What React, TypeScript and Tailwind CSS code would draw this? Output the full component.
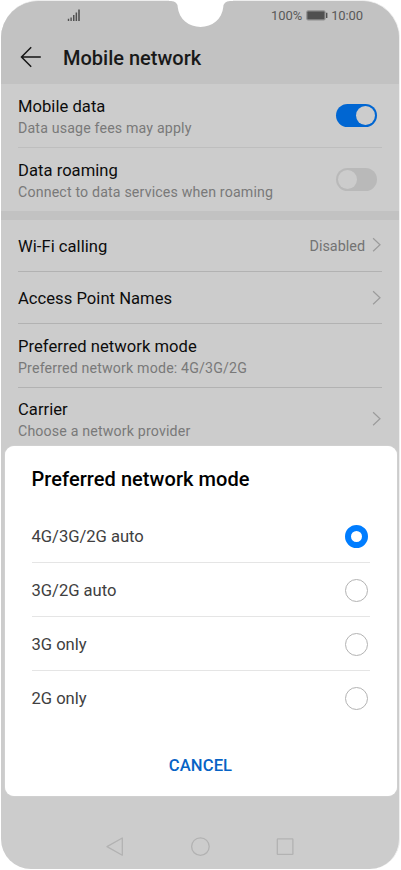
import React from "react";

function Chevron() {
  return (
    <svg width="10" height="16" viewBox="0 0 10 16" fill="none" stroke="#9b9b9b" strokeWidth="1.2">
      <path d="M1.1 1.2 8 7.7 1.1 14.2" />
    </svg>
  );
}

function Toggle({ on }: { on?: boolean }) {
  return (
    <div className={`mr-[5px] flex h-[22.5px] w-[41px] items-center rounded-full px-[2px] ${on ? "justify-end bg-[#0066d2]" : "justify-start bg-[#b9b9b9]"}`}>
      <div className="size-[19px] rounded-full bg-[#cccccc]" />
    </div>
  );
}

type RowProps = {
  title: string;
  sub?: string;
  size: string;
  divider?: string;
  value?: string;
  children?: React.ReactNode;
};

function Row({ title, sub, size, divider = "", value, children }: RowProps) {
  return (
    <div className={`mx-[17px] flex items-center justify-between ${size} ${divider}`}>
      <div className={sub ? "pt-[3px]" : "pt-px"}>
        <div className="text-[16.6px] leading-[21px] tracking-[0.03px] text-[#0c0c0c]">{title}</div>
        {sub && <div className="mt-px text-[14.2px] leading-[21px] tracking-[0.16px] text-[#797979]">{sub}</div>}
      </div>
      <div className="flex items-center">
        {value && <span className="mr-[7px] pt-[2px] text-[14.4px] text-[#737373]">{value}</span>}
        {children}
      </div>
    </div>
  );
}

const options = ["4G/3G/2G auto", "3G/2G auto", "3G only", "2G only"];

export default function App() {
  return (
    <div className="relative h-[870px] w-[401px] overflow-hidden bg-white font-['Roboto',sans-serif]">
      <main className="ml-px flex h-[869px] w-[399px] flex-col overflow-hidden rounded-t-[38px] rounded-b-[30px] border-t border-r border-[#eeeeee] bg-[#cccccc]">
        <header className="h-[83px] shrink-0 bg-[#c2c2c2]">
          <div className="flex h-[29px] items-center justify-between pr-[36px] pl-[66px]">
            <svg className="-mt-[2px]" width="14" height="14" viewBox="0 0 14 14" fill="#505050">
              <path d="M.8 10.8h1.4V13H.8zM3.4 9.5h1.4V13H3.4zM6 7h1.5v6H6zM8.6 4.5h1.5V13H8.6zM11.2 1.5h1.6V13h-1.6z" />
            </svg>
            <div className="flex items-center text-[13px] text-[#595959]">
              <span className="tracking-[-0.1px]">100%</span>
              <svg className="mr-[3px] ml-1" width="22" height="12" viewBox="0 0 22 12">
                <rect x=".2" y=".3" width="19.4" height="10.2" rx="2" fill="#8e8e8e" />
                <rect x="1.4" y="1.5" width="17" height="7.8" rx=".7" fill="#505050" />
                <path d="M20.7 2.7v5.3" stroke="#505050" strokeWidth="1.4" />
              </svg>
              <span className="tracking-[-0.1px]">10:00</span>
            </div>
          </div>
          <div className="flex h-[54px] items-center pl-[19px]">
            <svg width="22" height="22" viewBox="0 0 22 22" fill="none" stroke="#151515" strokeWidth="1.5">
              <path d="M20.8 11H1.5M11.2 1.3 1.5 11l9.7 9.7" />
            </svg>
            <h1 className="ml-[21px] pt-px text-[20px] font-medium text-[#191919]">Mobile network</h1>
          </div>
        </header>
        <Row title="Mobile data" sub="Data usage fees may apply" size="h-[64px]" divider="border-b border-[#bebebe]">
          <Toggle on />
        </Row>
        <Row title="Data roaming" sub="Connect to data services when roaming" size="h-[63px]">
          <Toggle />
        </Row>
        <div className="h-[9px] shrink-0 bg-[#c2c2c2]" />
        <Row title="Wi-Fi calling" value="Disabled" size="h-[52px]" divider="border-b border-[#b2b2b2]">
          <Chevron />
        </Row>
        <Row title="Access Point Names" size="h-[52px]" divider="border-b border-[#b2b2b2]">
          <Chevron />
        </Row>
        <Row title="Preferred network mode" sub="Preferred network mode: 4G/3G/2G" size="h-[64px]" divider="border-b border-[#b2b2b2]" />
        <Row title="Carrier" sub="Choose a network provider" size="h-[62px]">
          <Chevron />
        </Row>
        <nav className="mt-auto flex h-[32px] items-start justify-center gap-[66px] pr-px">
          <svg width="19" height="20" viewBox="0 0 19 20" fill="none" stroke="#b2b2b2" strokeWidth="1.3" strokeLinejoin="round">
            <path d="M17.3 1v17.2L2 9.6Z" />
          </svg>
          <svg width="20" height="20" viewBox="0 0 20 20" fill="none" stroke="#b2b2b2" strokeWidth="1.3">
            <circle cx="10.4" cy="9.6" r="8.8" />
          </svg>
          <svg width="18" height="20" viewBox="0 0 18 20" fill="none" stroke="#b2b2b2" strokeWidth="1.3">
            <rect x="1.3" y="1.8" width="15.6" height="15.6" rx=".6" />
          </svg>
        </nav>
      </main>
      <svg className="absolute top-0 left-[169px]" width="64" height="30" viewBox="0 0 64 30">
        <path d="M0 0v1h2Q8.5 1 8.8 7.5A22.8 21.6 0 0 0 54.2 7.5Q54.5 1 61 1h3V0Z" fill="#fff" />
      </svg>
      <section className="absolute top-[446px] left-[4.5px] flex h-[350.4px] w-[392px] flex-col rounded-[9px] bg-white px-[27px] shadow-[0_0_1px_#f4f4f4]">
        <h2 className="h-[63px] pt-[18px] text-[20px] leading-[30px] font-medium tracking-[0.06px] text-black">Preferred network mode</h2>
        {options.map((option, i) => (
          <div key={option} className={`flex h-[54.1px] items-center justify-between ${i < 3 ? "border-b border-[#e5e5e5]" : ""}`}>
            <span className="pt-[3px] text-[16.6px] tracking-[-0.03px] text-[#404040]">{option}</span>
            <span className={`mt-px mr-[2px] size-[23px] rounded-full ${i === 0 ? "border-[6px] border-[#007dff]" : "border border-[#b3b3b3]"}`} />
          </div>
        ))}
        <button className="mt-[28.6px] self-center text-[16.6px] leading-[24px] font-medium tracking-[0.1px] text-[#0763c5]">CANCEL</button>
      </section>
    </div>
  );
}
